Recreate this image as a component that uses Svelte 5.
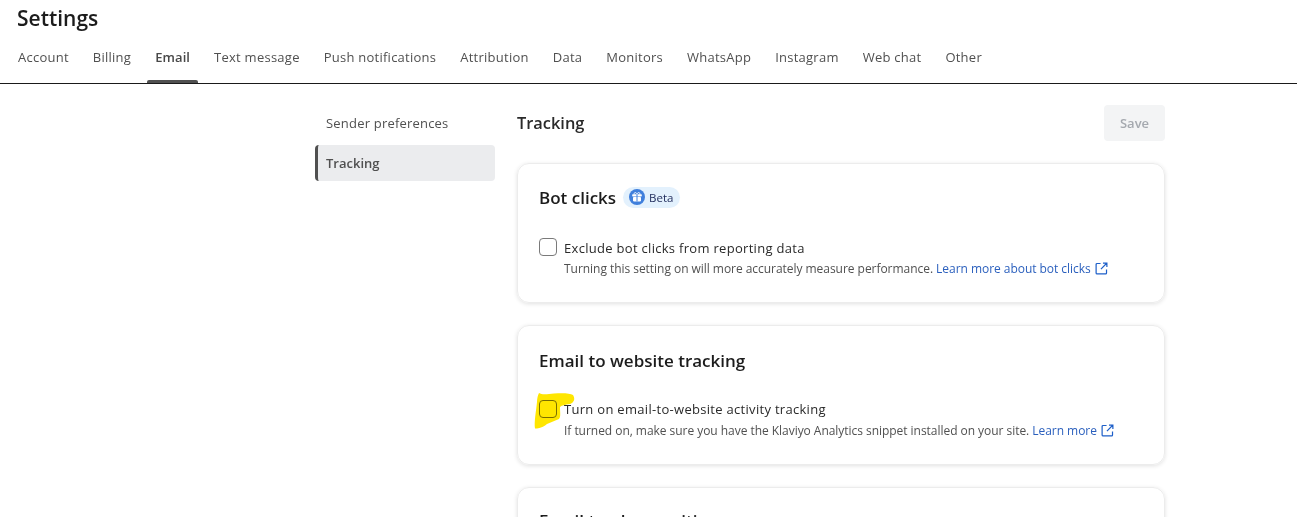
<script>
  const tabs = ['Account','Billing','Email','Text message','Push notifications','Attribution','Data','Monitors','WhatsApp','Instagram','Web chat','Other'];
</script>

<div class="page">
  <header class="head">
    <h1>Settings</h1>
    <nav class="tabs">
      {#each tabs as t}
        <span class="tab" class:active={t === 'Email'}>{t}</span>
      {/each}
    </nav>
  </header>
  <div class="body">
    <aside class="side">
      <div class="sitem">Sender preferences</div>
      <div class="sitem on">Tracking</div>
    </aside>
    <main class="main">
      <div class="top">
        <h2>Tracking</h2>
        <button class="save" disabled>Save</button>
      </div>
      <section class="card">
        <div class="ctitle">
          <h3>Bot clicks</h3>
          <span class="beta">
            <svg viewBox="0 0 16 16" width="16" height="16"><circle cx="8" cy="8" r="8" fill="#3f7fdc"/><path d="M5.2 5.4C4.8 3.2 6.8 3 8 4.8 9.200 3 11.200 3.200 10.800 5.400" fill="none" stroke="#fff" stroke-width="1"/><rect x="3.200" y="5.200" width="9.600" height="2.200" rx=".6" fill="#fff"/><rect x="4" y="8" width="8" height="4.400" rx=".8" fill="#fff"/><rect x="7.500" y="5.200" width="1" height="7.200" fill="#3f7fdc"/></svg>
            Beta
          </span>
        </div>
        <div class="opt">
          <span class="box"></span>
          <div>
            <div class="label">Exclude bot clicks from reporting data</div>
            <div class="help">Turning this setting on will more accurately measure performance. <span class="link">Learn more about bot clicks<svg class="ext" viewBox="0 0 14 14" width="13" height="13" fill="none" stroke="#1d5fc9" stroke-width="1.3"><path d="M6 1.6H2.2a1 1 0 0 0-1 1v9.2a1 1 0 0 0 1 1h9.2a1 1 0 0 0 1-1V8M8.6 1.2h4.2v4.2M12.6 1.4 6.4 7.6"/></svg></span></div>
          </div>
        </div>
      </section>
      <section class="card">
        <div class="ctitle plain"><h3>Email to website tracking</h3></div>
        <div class="opt tight">
          <span class="box"></span>
          <div>
            <div class="label">Turn on email-to-website activity tracking</div>
            <div class="help">If turned on, make sure you have the Klaviyo Analytics snippet installed on your site. <span class="link">Learn more<svg class="ext" viewBox="0 0 14 14" width="13" height="13" fill="none" stroke="#1d5fc9" stroke-width="1.3"><path d="M6 1.6H2.2a1 1 0 0 0-1 1v9.2a1 1 0 0 0 1 1h9.2a1 1 0 0 0 1-1V8M8.6 1.2h4.2v4.2M12.6 1.4 6.4 7.6"/></svg></span></div>
          </div>
          <svg class="marker" viewBox="0 0 42 37" width="42" height="37"><path d="M5 1C8 3 14 2 20 1.500 28 1 36 1 39 3 41 6 41 10 36 12 31 13 28 13 26 15 26 20 27 25 25 27 21 29 17 30 13 32 8 36 3 37 1 36.500 0 30 2 20 3 10 3 6 4 3 5 1Z" fill="#ffe600"/></svg>
        </div>
      </section>
      <section class="card">
        <div class="ctitle cut"><h3>Email tracker position</h3></div>
      </section>
    </main>
  </div>
</div>

<style>
  :global(body) { margin: 0; background: #fff; }
  .page { height: 517px; overflow: hidden; background: #fff; font-family: "Open Sans", "Noto Sans", sans-serif; color: #1a1a1a; }
  .head { height: 83px; border-bottom: 1px solid #1a1a1a; padding-left: 17px; position: relative; }
  h1 { margin: 0; font-size: 21px; font-weight: 600; line-height: 27px; padding-top: 5px; color: #1c1c1c; }
  .tabs { display: flex; margin-top: 15px; gap: 24px; padding-left: 1px; }
  .tab { font-size: 13px; color: #505050; line-height: 20px; position: relative; padding-bottom: 16px; letter-spacing: .25px; }
  .tab.active { font-weight: 600; color: #484848; letter-spacing: .1px; }
  .tab.active::after { content: ""; position: absolute; left: -8px; right: -8px; bottom: 0; height: 3px; background: #505050; border-radius: 2px 2px 0 0; }
  .body { display: flex; padding-left: 315px; width: 850px; gap: 22px; }
  .side { width: 180px; padding-top: 21px; flex: none; }
  .sitem { height: 36px; line-height: 36px; font-size: 13px; color: #505050; padding-left: 11px; margin-bottom: 4px; box-sizing: border-box; letter-spacing: .2px; }
  .sitem.on { background: #ebecee; border-left: 3px solid #505050; padding-left: 8px; font-weight: 600; border-radius: 4px; letter-spacing: 0; }
  .main { width: 648px; flex: none; }
  .top { display: flex; justify-content: space-between; align-items: center; padding-top: 21px; margin-bottom: 22px; }
  h2 { margin: 0 0 2px; font-size: 16.4px; font-weight: 600; color: #2a2a2a; }
  .save { width: 61px; height: 36px; border: 0; border-radius: 4px; background: #f3f4f5; color: #a5a9af; font: 600 13px "Open Sans", sans-serif; }
  .card { border: 1px solid #ececec; border-radius: 12px; box-shadow: 0 1px 4px rgba(0,0,0,.12); padding: 21px; margin-bottom: 22px; height: 140px; box-sizing: border-box; }
  .ctitle { display: flex; align-items: center; gap: 7px; height: 24px; margin-bottom: 29px; }
  .ctitle.plain { padding-top: 1px; margin-bottom: 28px; }
  .ctitle.cut h3 { margin-top: -2px; }
  h3 { margin: 0; font-size: 17px; font-weight: 600; color: #1c1c1c; }
  .beta { display: inline-flex; align-items: center; gap: 4px; height: 21px; padding: 0 6px 0 6px; background: #e3f1fd; border-radius: 11px; font-size: 11.5px; color: #1e2a5a; }
  .opt { display: flex; gap: 7px; position: relative; }
  .box { width: 16px; height: 16px; border: 1px solid #7a7a7a; border-radius: 4px; flex: none; }
  .label { font-size: 13px; line-height: 20px; color: #2a2a2a; letter-spacing: .3px; }
  .help { font-size: 12px; line-height: 20px; color: #505050; letter-spacing: -.04px; margin-top: 1px; }
  .tight .label { margin-top: -1px; }
  .tight .help { margin-top: 2px; }
  .link { color: #2a5fbd; }
  .ext { margin-left: 4px; vertical-align: -2px; }
  .marker { position: absolute; left: -5px; top: -8px; mix-blend-mode: multiply; }
</style>
